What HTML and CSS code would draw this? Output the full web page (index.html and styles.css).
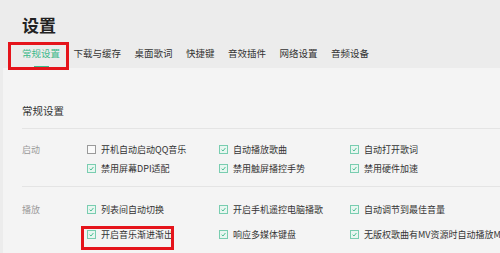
FILE: index.html
```html
<!DOCTYPE html>
<html lang="zh-CN">
<head>
<meta charset="utf-8">
<title>设置</title>
<link rel="stylesheet" href="styles.css">
</head>
<body>
<div class="page">
  <header class="header">
    <h1 class="title">设置</h1>
    <nav class="tabs">
      <div class="tab active"><span class="tab-text">常规设置</span><span class="tab-bar"></span></div>
      <div class="tab"><span class="tab-text">下载与缓存</span><span class="tab-bar"></span></div>
      <div class="tab"><span class="tab-text">桌面歌词</span><span class="tab-bar"></span></div>
      <div class="tab"><span class="tab-text">快捷键</span><span class="tab-bar"></span></div>
      <div class="tab"><span class="tab-text">音效插件</span><span class="tab-bar"></span></div>
      <div class="tab"><span class="tab-text">网络设置</span><span class="tab-bar"></span></div>
      <div class="tab"><span class="tab-text">音频设备</span><span class="tab-bar"></span></div>
    </nav>
  </header>
  <main class="content">
    <h2 class="section-title">常规设置</h2>
    <section class="group group-start">
      <div class="group-label">启动</div>
      <label class="opt"><span class="cb"></span><span>开机自动启动QQ音乐</span></label>
      <label class="opt"><span class="cb checked"><svg viewBox="0 0 9 9" width="9" height="9"><polyline points="2.6,4.7 4,6 6.4,3" /></svg></span><span>自动播放歌曲</span></label>
      <label class="opt"><span class="cb checked"><svg viewBox="0 0 9 9" width="9" height="9"><polyline points="2.6,4.7 4,6 6.4,3" /></svg></span><span>自动打开歌词</span></label>
      <div></div>
      <label class="opt"><span class="cb checked"><svg viewBox="0 0 9 9" width="9" height="9"><polyline points="2.6,4.7 4,6 6.4,3" /></svg></span><span>禁用屏幕DPI适配</span></label>
      <label class="opt"><span class="cb checked"><svg viewBox="0 0 9 9" width="9" height="9"><polyline points="2.6,4.7 4,6 6.4,3" /></svg></span><span>禁用触屏播控手势</span></label>
      <label class="opt"><span class="cb checked"><svg viewBox="0 0 9 9" width="9" height="9"><polyline points="2.6,4.7 4,6 6.4,3" /></svg></span><span>禁用硬件加速</span></label>
    </section>
    <section class="group group-play">
      <div class="group-label">播放</div>
      <label class="opt"><span class="cb checked"><svg viewBox="0 0 9 9" width="9" height="9"><polyline points="2.6,4.7 4,6 6.4,3" /></svg></span><span>列表间自动切换</span></label>
      <label class="opt"><span class="cb checked"><svg viewBox="0 0 9 9" width="9" height="9"><polyline points="2.6,4.7 4,6 6.4,3" /></svg></span><span>开启手机遥控电脑播歌</span></label>
      <label class="opt"><span class="cb checked"><svg viewBox="0 0 9 9" width="9" height="9"><polyline points="2.6,4.7 4,6 6.4,3" /></svg></span><span>自动调节到最佳音量</span></label>
      <div></div>
      <label class="opt"><span class="cb checked"><svg viewBox="0 0 9 9" width="9" height="9"><polyline points="2.6,4.7 4,6 6.4,3" /></svg></span><span>开启音乐渐进渐出</span></label>
      <label class="opt"><span class="cb checked"><svg viewBox="0 0 9 9" width="9" height="9"><polyline points="2.6,4.7 4,6 6.4,3" /></svg></span><span>响应多媒体键盘</span></label>
      <label class="opt"><span class="cb checked"><svg viewBox="0 0 9 9" width="9" height="9"><polyline points="2.6,4.7 4,6 6.4,3" /></svg></span><span>无版权歌曲有MV资源时自动播放MV</span></label>
    </section>
  </main>
  <div class="mark mark-tab"></div>
  <div class="mark mark-fade"></div>
</div>
</body>
</html>
```

FILE: styles.css
```css
html, body {
  margin: 0;
  padding: 0;
}
body {
  width: 500px;
  height: 253px;
  overflow: hidden;
  background: #ececec;
  font-family: "Noto Sans CJK SC", "Noto Sans", sans-serif;
  color: #333;
}
.page {
  position: relative;
  width: 500px;
  height: 253px;
  overflow: hidden;
}
.header {
  height: 68px;
  padding-left: 22px;
  box-sizing: border-box;
}
.title {
  margin: 0;
  padding-top: 15px;
  font-size: 17px;
  line-height: 20px;
  font-weight: bold;
  color: #222;
}
.tabs {
  display: flex;
  gap: 13.5px;
  margin-top: 8px;
  white-space: nowrap;
}
.tab {
  display: flex;
  flex-direction: column;
  align-items: center;
}
.tab-text {
  font-size: 9.5px;
  line-height: 20px;
  color: #333;
}
.tab-bar {
  width: 15px;
  height: 2px;
  margin-top: 3px;
}
.tab.active .tab-text {
  color: #3cb98a;
}
.tab.active .tab-bar {
  background: #3cb98a;
}
.content {
  margin-left: 3px;
  height: 185px;
  background: #f4f4f4;
  padding-left: 19px;
  box-sizing: border-box;
  padding-top: 33px;
}
.section-title {
  margin: 0;
  font-size: 10.5px;
  line-height: 20px;
  font-weight: normal;
  color: #333;
}
.group {
  display: grid;
  grid-template-columns: 65px 132px 131px max-content;
  border-top: 1px solid #e4e4e4;
  white-space: nowrap;
}
.group-start {
  margin-top: 7px;
  padding-top: 11px;
  padding-bottom: 8px;
  grid-auto-rows: 19px;
}
.group-play {
  padding-top: 13px;
  grid-auto-rows: 19px;
  row-gap: 6px;
}
.group-label {
  font-size: 9px;
  line-height: 19px;
  color: #999;
}
.opt {
  display: flex;
  align-items: center;
  gap: 5px;
  font-size: 9px;
  line-height: 19px;
  color: #333;
}
.cb {
  width: 9px;
  height: 9px;
  box-sizing: border-box;
  border: 1px solid #9a9a9a;
  background: #fafafa;
  display: flex;
  flex: none;
  position: relative;
}
.cb svg {
  position: absolute;
  left: -1px;
  top: -1px;
  fill: none;
  stroke: #3cb98a;
  stroke-width: 0.9;
}
.cb.checked {
  border-color: #79cdb0;
  background: #e8f6f0;
}
.mark {
  position: absolute;
  border: 3px solid #e5141b;
  box-sizing: border-box;
}
.mark-tab {
  left: 8px;
  top: 42px;
  width: 61px;
  height: 28px;
}
.mark-fade {
  left: 81px;
  top: 226px;
  width: 93px;
  height: 24px;
}
```
